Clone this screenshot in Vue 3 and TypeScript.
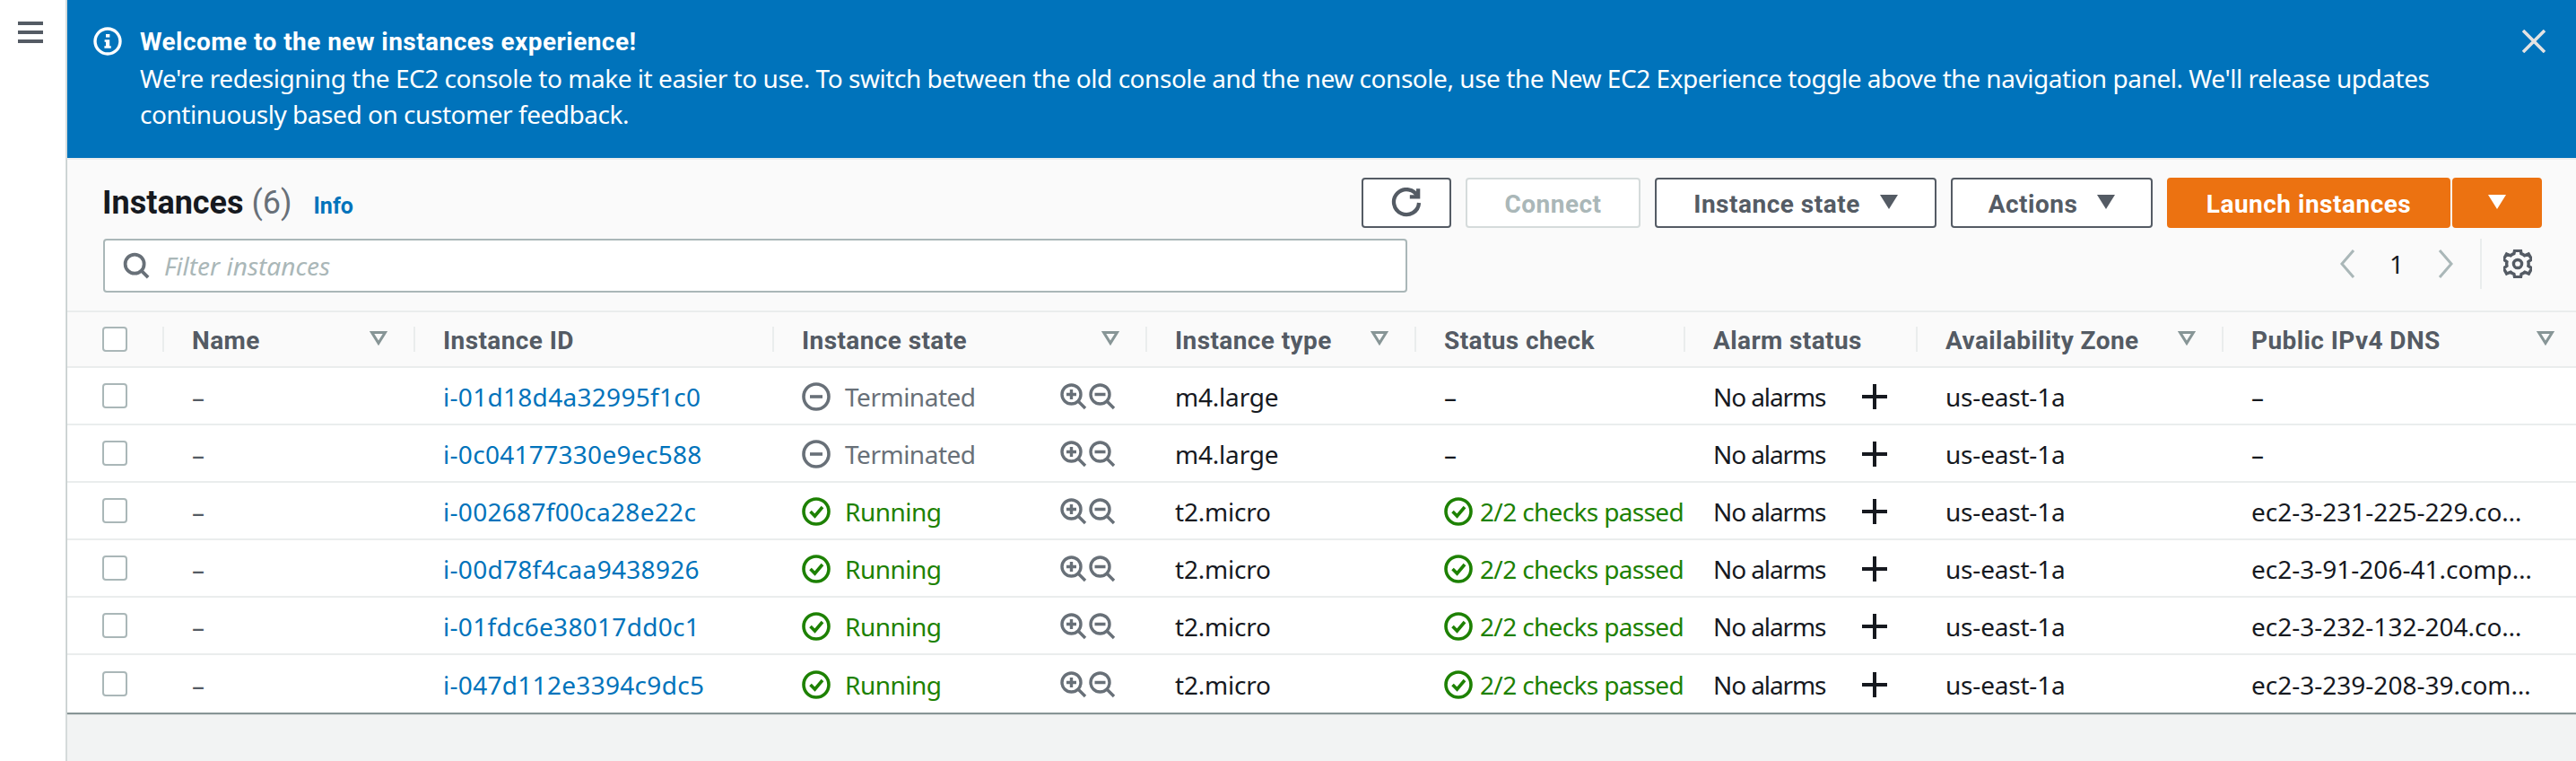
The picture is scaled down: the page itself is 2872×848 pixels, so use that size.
<script setup lang="ts">
interface Instance {
  id: string
  state: 'Terminated' | 'Running'
  type: string
  dns: string
}

const instances: Instance[] = [
  { id: 'i-01d18d4a32995f1c0', state: 'Terminated', type: 'm4.large', dns: '–' },
  { id: 'i-0c04177330e9ec588', state: 'Terminated', type: 'm4.large', dns: '–' },
  { id: 'i-002687f00ca28e22c', state: 'Running', type: 't2.micro', dns: 'ec2-3-231-225-229.compute-1.amazonaws.com' },
  { id: 'i-00d78f4caa9438926', state: 'Running', type: 't2.micro', dns: 'ec2-3-91-206-41.compute-1.amazonaws.com' },
  { id: 'i-01fdc6e38017dd0c1', state: 'Running', type: 't2.micro', dns: 'ec2-3-232-132-204.compute-1.amazonaws.com' },
  { id: 'i-047d112e3394c9dc5', state: 'Running', type: 't2.micro', dns: 'ec2-3-239-208-39.compute-1.amazonaws.com' },
]

const columns = [
  { label: 'Name', filter: true },
  { label: 'Instance ID', filter: false },
  { label: 'Instance state', filter: true },
  { label: 'Instance type', filter: true },
  { label: 'Status check', filter: false },
  { label: 'Alarm status', filter: false },
  { label: 'Availability Zone', filter: true },
  { label: 'Public IPv4 DNS', filter: true },
]
</script>

<template>
  <div class="shell">
    <aside class="side">
      <button class="burger" aria-label="Open navigation"><span /><span /><span /></button>
    </aside>

    <main class="content">
      <!-- Banner -->
      <section class="banner">
        <svg class="banner-icon" viewBox="0 0 32 32" fill="none">
          <circle cx="16" cy="16" r="14" stroke="#fff" stroke-width="3.4" />
          <rect x="14" y="8" width="4.4" height="3.6" fill="#fff" />
          <path d="M12.6 14.2h5.6v7h1.6v2.6h-7.4v-2.6h1.6v-4.4h-1.4z" fill="#fff" />
        </svg>
        <div class="banner-text">
          <strong>Welcome to the new instances experience!</strong>
          <p>We're redesigning the EC2 console to make it easier to use. To switch between the old console and the new console, use the New EC2 Experience toggle above the navigation panel. We'll release updates continuously based on customer feedback.</p>
        </div>
        <svg class="banner-close" viewBox="0 0 26 26" fill="none" stroke="#e3e3e3" stroke-width="3.6">
          <path d="M1 1l24 24M25 1L1 25" />
        </svg>
      </section>

      <!-- Table -->
      <section class="panel">
        <div class="toolbar">
          <div class="toolbar-row">
            <h1>Instances <span class="count">(6)</span></h1>
            <a class="info">Info</a>
            <div class="actions">
              <button class="btn btn-icon" aria-label="Refresh">
                <svg width="34" height="34" viewBox="0 0 16 16" fill="none" stroke="#545b64" stroke-width="2">
                  <path d="M9.8 4.9h4.4V.6" />
                  <path d="M14 4.8A6.6 6.6 0 1 0 14.6 8" />
                </svg>
              </button>
              <button class="btn btn-off">Connect</button>
              <button class="btn btn-state">Instance state <i class="caret" /></button>
              <button class="btn btn-actions">Actions <i class="caret" /></button>
              <div class="split">
                <button class="btn btn-primary btn-launch">Launch instances</button>
                <button class="btn btn-primary btn-more" aria-label="More"><i class="caret caret-white" /></button>
              </div>
            </div>
          </div>
          <div class="toolbar-row second">
            <label class="search">
              <svg width="30" height="30" viewBox="0 0 16 16" fill="none" stroke="#687078" stroke-width="2">
                <circle cx="7" cy="7" r="5.6" />
                <path d="M11 11l4 4" />
              </svg>
              <input placeholder="Filter instances" />
            </label>
            <div class="pager">
              <svg width="18" height="32" viewBox="0 0 18 32" fill="none" stroke="#aab7b8" stroke-width="3"><path d="M16 1L3 16l13 15" /></svg>
              <span class="page">1</span>
              <svg width="18" height="32" viewBox="0 0 18 32" fill="none" stroke="#aab7b8" stroke-width="3"><path d="M2 1l13 15L2 31" /></svg>
              <span class="pager-rule" />
              <svg width="32" height="32" viewBox="1 1 14 14" fill="none" stroke="#545b64" stroke-width="1.5">
                <path d="M13.3 8a5.3 5.3 0 0 0-.1-1l1.6-1.2-1.5-2.6-1.9.8a5.3 5.3 0 0 0-1.7-1L9.5 1.6h-3l-.3 1.4a5.3 5.3 0 0 0-1.7 1l-1.9-.8L1.1 5.8 2.7 7a5.3 5.3 0 0 0 0 2l-1.6 1.2 1.5 2.6 1.9-.8a5.3 5.3 0 0 0 1.7 1l.3 1.4h3l.3-1.4a5.3 5.3 0 0 0 1.7-1l1.9.8 1.5-2.6L13.2 9c.1-.3.1-.7.1-1z" />
                <circle cx="8" cy="8" r="2" />
              </svg>
            </div>
          </div>
        </div>

        <div class="grid head">
          <div class="cell check"><span class="box" /></div>
          <div v-for="col in columns" :key="col.label" class="cell th">
            <span class="th-label">{{ col.label }}</span>
            <svg v-if="col.filter" class="funnel" viewBox="0 0 20 16" fill="none" stroke="#879596" stroke-width="3">
              <path d="M2.6 1.5h14.8L10 13.4z" />
            </svg>
          </div>
        </div>

        <div v-for="row in instances" :key="row.id" class="grid row">
          <div class="cell check"><span class="box" /></div>
          <div class="cell muted">–</div>
          <div class="cell"><a class="link">{{ row.id }}</a></div>
          <div class="cell state">
            <span class="status" :class="row.state === 'Running' ? 'ok' : 'off'">
              <svg v-if="row.state === 'Running'" class="status-icon" viewBox="0 0 32 32" fill="none" stroke="currentColor" stroke-width="3.6">
                <circle cx="16" cy="16" r="14" />
                <path d="M9.5 16l5 5 8.5-10" />
              </svg>
              <svg v-else class="status-icon" viewBox="0 0 32 32" fill="none" stroke="currentColor" stroke-width="3.6">
                <circle cx="16" cy="16" r="14" />
                <path d="M9 16h14" />
              </svg>
              {{ row.state }}
            </span>
            <span class="zoom">
              <svg width="30" height="30" viewBox="0 0 30 30" fill="none" stroke="#687078" stroke-width="3.4">
                <circle cx="12.5" cy="12.5" r="10.5" />
                <path d="M20 20l8 8M7 12.5h11M12.5 7v11" />
              </svg>
              <svg width="30" height="30" viewBox="0 0 30 30" fill="none" stroke="#687078" stroke-width="3.4">
                <circle cx="12.5" cy="12.5" r="10.5" />
                <path d="M20 20l8 8M6.5 12.5h12" />
              </svg>
            </span>
          </div>
          <div class="cell narrow">{{ row.type }}</div>
          <div class="cell clip">
            <span v-if="row.state === 'Running'" class="status ok checks">
              <svg class="status-icon tight" viewBox="0 0 32 32" fill="none" stroke="currentColor" stroke-width="3.6">
                <circle cx="16" cy="16" r="14" />
                <path d="M9.5 16l5 5 8.5-10" />
              </svg>
              2/2 checks passed
            </span>
            <span v-else>–</span>
          </div>
          <div class="cell alarm">
            <span class="alarm-text">No alarms</span>
            <svg class="plus" viewBox="0 0 30 30" fill="none" stroke="#16191f" stroke-width="4">
              <path d="M15 1v28M1 15h28" />
            </svg>
          </div>
          <div class="cell narrow">us-east-1a</div>
          <div class="cell dns"><span class="dns-text">{{ row.dns }}</span></div>
        </div>
      </section>
    </main>
  </div>
</template>

<style>
html,
body {
  margin: 0;
  background: #fff;
}
</style>

<style scoped>
.shell {
  display: flex;
  height: 848px;
  overflow: hidden;
  font-family: "Noto Sans", "Open Sans", sans-serif;
  font-size: 28px;
  color: #16191f;
}

.side {
  width: 75px;
  flex: none;
  box-sizing: border-box;
  border-right: 2px solid #d5dbdb;
  padding: 24px 0 0 20px;
  background: #fff;
}

.burger {
  display: flex;
  flex-direction: column;
  justify-content: space-between;
  width: 28px;
  height: 24px;
  padding: 0;
  border: 0;
  background: none;
}

.burger span {
  display: block;
  height: 4px;
  background: #545b64;
}

.content {
  flex: 1;
  min-width: 0;
  background: #f2f3f3;
}

.banner {
  display: flex;
  align-items: flex-start;
  height: 176px;
  box-sizing: border-box;
  padding: 27px 34px 0 29px;
  background: #0073bb;
  color: #fff;
}

.banner-icon {
  width: 32px;
  height: 32px;
  flex: none;
  margin: 3px 20px 0 0;
}

.banner-text {
  flex: 1;
  line-height: 40px;
}

.banner-text strong {
  display: block;
  font-family: Roboto, sans-serif;
  letter-spacing: 0.45px;
}

.banner-text p {
  margin: 0;
  letter-spacing: -0.46px;
}

.banner-close {
  width: 26px;
  height: 26px;
  flex: none;
  margin: 6px 0 0 40px;
}

.panel {
  border-top: 2px solid #eaeded;
  background: #fff;
  box-shadow: 0 2px 1px #879596;
}

.toolbar {
  height: 168px;
  box-sizing: border-box;
  padding: 20px 38px 0 40px;
  background: #fafafa;
}

.toolbar-row {
  display: flex;
  align-items: center;
}

.second {
  justify-content: space-between;
  margin-top: 12px;
}

h1 {
  margin: 0 0 0 -1px;
  font-family: Roboto, sans-serif;
  font-size: 36px;
  font-weight: 700;
}

.count {
  font-weight: 400;
  color: #687078;
}

.info {
  margin: 6px 0 0 24px;
  font-family: Roboto, sans-serif;
  font-size: 25px;
  font-weight: 700;
  color: #0073bb;
}

.actions {
  display: flex;
  gap: 16px;
  margin-left: auto;
}

.btn {
  display: flex;
  align-items: center;
  justify-content: center;
  gap: 22px;
  height: 56px;
  box-sizing: border-box;
  padding: 2px 0 0;
  border: 2px solid #545b64;
  border-radius: 4px;
  background: #fff;
  color: #545b64;
  font: 700 28px Roboto, sans-serif;
  letter-spacing: 0.5px;
}

.btn-icon {
  width: 100px;
  padding-top: 0;
}

.btn-off {
  width: 195px;
  border-color: #d5dbdb;
  color: #aab7b8;
}

.btn-state {
  width: 314px;
}

.btn-actions {
  width: 225px;
}

.split {
  display: flex;
  gap: 2px;
}

.btn-primary {
  border-color: #ec7211;
  background: #ec7211;
  color: #fff;
}

.btn-launch {
  width: 316px;
}

.btn-more {
  width: 100px;
}

.caret {
  width: 0;
  height: 0;
  margin-top: -4px;
  border-left: 10px solid transparent;
  border-right: 10px solid transparent;
  border-top: 16px solid #545b64;
}

.caret-white {
  border-top-color: #fff;
}

.search {
  display: flex;
  align-items: center;
  gap: 16px;
  width: 1454px;
  height: 60px;
  box-sizing: border-box;
  padding: 0 20px;
  border: 2px solid #aab7b8;
  border-radius: 4px;
  background: #fff;
}

.search input {
  flex: 1;
  min-width: 0;
  padding: 0;
  border: 0;
  outline: 0;
  background: none;
  font: italic 28px "Noto Sans", "Open Sans", sans-serif;
}

.search input::placeholder {
  color: #aab7b8;
  opacity: 1;
}

.pager {
  display: flex;
  align-items: center;
  height: 56px;
  margin: -4px 11px 0 0;
}

.page {
  width: 92px;
  text-align: center;
}

.pager-rule {
  width: 2px;
  height: 56px;
  margin: 0 24px 0 29px;
  background: #eaeded;
}

.grid {
  display: grid;
  grid-template-columns: 106px 280px 400px 416px 300px 300px 259px 341px 395px;
}

.head {
  height: 60px;
  border-top: 2px solid #eaeded;
  border-bottom: 2px solid #eaeded;
  background: #fafafa;
}

.row {
  height: 62px;
  border-bottom: 2px solid #eaeded;
}

.row:last-child {
  border-bottom: 0;
  height: 64px;
}

.cell {
  display: flex;
  align-items: center;
  box-sizing: border-box;
  min-width: 0;
  padding-left: 33px;
  padding-top: 2px;
  white-space: nowrap;
}

.check {
  padding-left: 39px;
  padding-top: 0;
}

.box {
  width: 28px;
  height: 28px;
  box-sizing: border-box;
  border: 2px solid #aab7b8;
  border-radius: 4px;
  background: #fff;
}

.th {
  position: relative;
  justify-content: space-between;
  padding-right: 29px;
  font-family: Roboto, sans-serif;
  font-weight: 700;
  letter-spacing: 0.4px;
  color: #545b64;
}

.th:last-child {
  padding-right: 24px;
}

.th::before {
  content: "";
  position: absolute;
  left: 0;
  top: 16px;
  bottom: 16px;
  width: 2px;
  background: #eaeded;
}

.funnel {
  width: 20px;
  height: 16px;
  flex: none;
  margin-top: -4px;
}

.muted {
  color: #545b64;
}

.link {
  color: #0073bb;
  letter-spacing: 0.3px;
}

.state {
  justify-content: space-between;
  padding-right: 33px;
}

.status {
  display: flex;
  align-items: center;
  gap: 16px;
  letter-spacing: -0.5px;
}

.ok {
  color: #1d8102;
}

.off {
  color: #687078;
}

.status-icon {
  width: 32px;
  height: 32px;
  flex: none;
}

.tight {
  margin-right: -8px;
}

.checks {
  letter-spacing: -0.65px;
}

.zoom {
  display: flex;
  gap: 2px;
}

.clip {
  overflow: hidden;
}

.narrow {
  letter-spacing: -0.2px;
}

.alarm {
  justify-content: space-between;
  padding-right: 31px;
}

.alarm-text {
  letter-spacing: -1.1px;
}

.plus {
  width: 30px;
  height: 30px;
  flex: none;
}

.dns {
  padding-right: 38px;
}

.dns-text {
  overflow: hidden;
  text-overflow: ellipsis;
}
</style>
